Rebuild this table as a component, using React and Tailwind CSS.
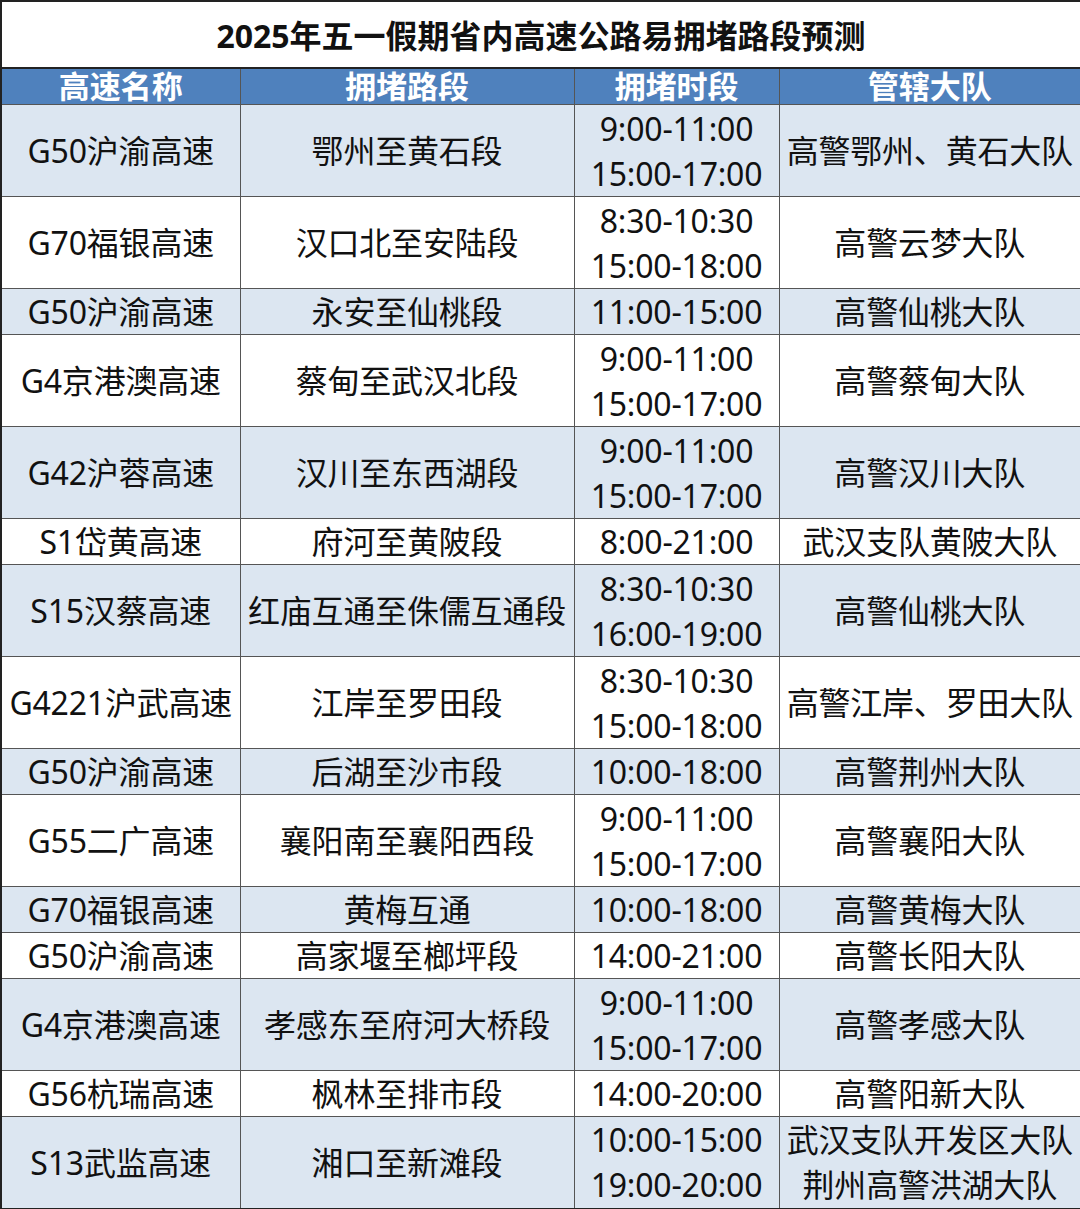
import React from 'react'

const rows = [
  ['G50沪渝高速', '鄂州至黄石段', ['9:00-11:00', '15:00-17:00'], ['高警鄂州、黄石大队']],
  ['G70福银高速', '汉口北至安陆段', ['8:30-10:30', '15:00-18:00'], ['高警云梦大队']],
  ['G50沪渝高速', '永安至仙桃段', ['11:00-15:00'], ['高警仙桃大队']],
  ['G4京港澳高速', '蔡甸至武汉北段', ['9:00-11:00', '15:00-17:00'], ['高警蔡甸大队']],
  ['G42沪蓉高速', '汉川至东西湖段', ['9:00-11:00', '15:00-17:00'], ['高警汉川大队']],
  ['S1岱黄高速', '府河至黄陂段', ['8:00-21:00'], ['武汉支队黄陂大队']],
  ['S15汉蔡高速', '红庙互通至侏儒互通段', ['8:30-10:30', '16:00-19:00'], ['高警仙桃大队']],
  ['G4221沪武高速', '江岸至罗田段', ['8:30-10:30', '15:00-18:00'], ['高警江岸、罗田大队']],
  ['G50沪渝高速', '后湖至沙市段', ['10:00-18:00'], ['高警荆州大队']],
  ['G55二广高速', '襄阳南至襄阳西段', ['9:00-11:00', '15:00-17:00'], ['高警襄阳大队']],
  ['G70福银高速', '黄梅互通', ['10:00-18:00'], ['高警黄梅大队']],
  ['G50沪渝高速', '高家堰至榔坪段', ['14:00-21:00'], ['高警长阳大队']],
  ['G4京港澳高速', '孝感东至府河大桥段', ['9:00-11:00', '15:00-17:00'], ['高警孝感大队']],
  ['G56杭瑞高速', '枫林至排市段', ['14:00-20:00'], ['高警阳新大队']],
  ['S13武监高速', '湘口至新滩段', ['10:00-15:00', '19:00-20:00'], ['武汉支队开发区大队', '荆州高警洪湖大队']],
]

const cell = 'border border-[#555] text-center align-middle p-0 whitespace-nowrap text-[32px] leading-[45px] tracking-[-0.2px]'

const App = () => {
  return (
    <div
      className="w-[1080px] h-[1209px] bg-white overflow-hidden text-[#111]"
      style={{ fontFamily: "'Noto Sans', 'Noto Sans CJK SC', sans-serif" }}
    >
      <table className="w-[1080px] table-fixed border-collapse border-2 border-[#222]">
        <colgroup>
          <col className="w-[239px]" />
          <col className="w-[334px]" />
          <col className="w-[205px]" />
          <col className="w-[302px]" />
        </colgroup>
        <thead>
          <tr className="h-[67px]">
            <th colSpan={4} className="border-2 border-[#222] text-[32px] font-bold text-center leading-none pt-[2px]">
              2025年五一假期省内高速公路易拥堵路段预测
            </th>
          </tr>
          <tr className="h-[35px] bg-[#4f81bd] text-white">
            {['高速名称', '拥堵路段', '拥堵时段', '管辖大队'].map((h) => (
              <th key={h} className="border border-[#555] text-[31px] font-bold leading-[35px] p-0">
                {h}
              </th>
            ))}
          </tr>
        </thead>
        <tbody>
          {rows.map((r, i) => {
            const two = r[2].length > 1
            return (
              <tr key={i} className={`${two ? 'h-[92px]' : 'h-[46px]'} ${i % 2 === 0 ? 'bg-[#dce6f1]' : 'bg-white'}`}>
                <td className={cell}>{r[0]}</td>
                <td className={cell}>{r[1]}</td>
                <td className={cell}>
                  {r[2].map((t) => (
                    <div key={t}>{t}</div>
                  ))}
                </td>
                <td className={cell}>
                  {r[3].map((t) => (
                    <div key={t}>{t}</div>
                  ))}
                </td>
              </tr>
            )
          })}
        </tbody>
      </table>
    </div>
  )
}

export default App
